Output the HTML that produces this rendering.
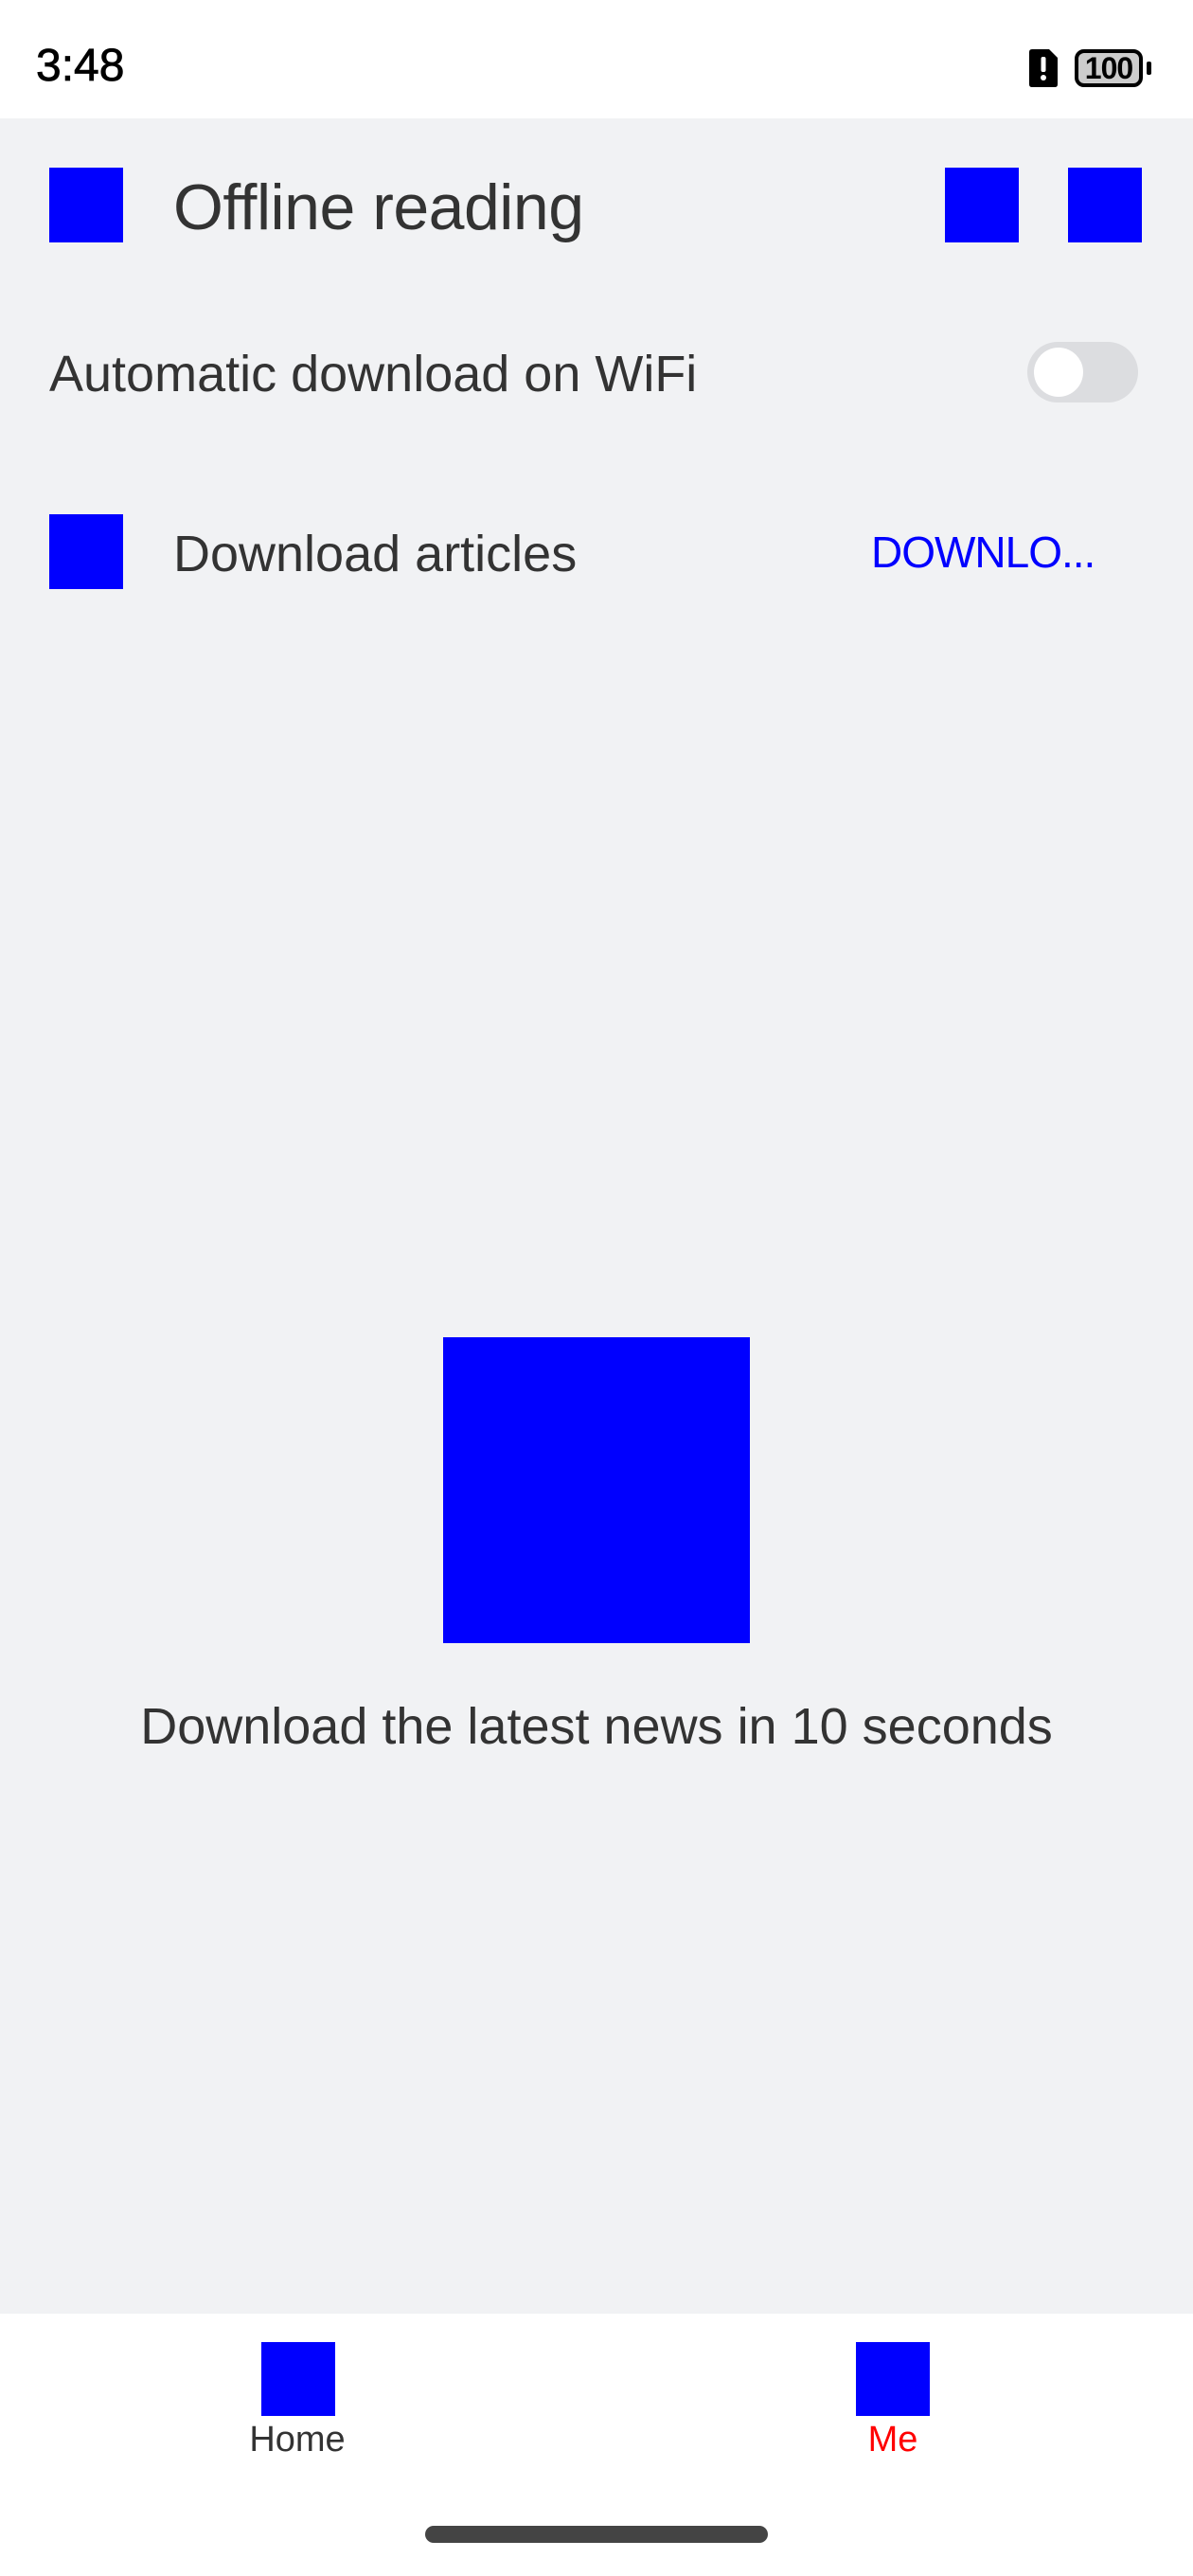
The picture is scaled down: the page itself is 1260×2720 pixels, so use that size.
<!DOCTYPE html>
<html><head><meta charset="utf-8"><style>
*{margin:0;padding:0;box-sizing:border-box}
body{width:1260px;height:2720px;background:#f1f2f4;font-family:"Liberation Sans",sans-serif;position:relative;overflow:hidden;color:#333}
.a{position:absolute}
.b{position:absolute;background:#0000ff}
</style></head><body>
<div class="a" style="left:0;top:0;width:1260px;height:125px;background:#fff"></div>
<div class="a" style="left:38px;top:45px;font-size:48px;color:#000;line-height:50px;font-weight:500;-webkit-text-stroke:0.8px #000">3:48</div>
<svg class="a" style="left:1087px;top:52px" width="32" height="40" viewBox="0 0 32 40"><path d="M3 0H21L30 9V37Q30 40 27 40H3Q0 40 0 37V3Q0 0 3 0Z" fill="#000"/><rect x="12.5" y="8" width="5" height="16" rx="2" fill="#fff"/><circle cx="15" cy="30" r="3" fill="#fff"/></svg>
<div class="a" style="left:1135px;top:52px;width:72px;height:40px;border:4px solid #000;border-radius:10px;background:#ccc;font-size:32px;font-weight:bold;color:#000;text-align:center;line-height:32px;letter-spacing:-1px">100</div>
<div class="a" style="left:1211px;top:65px;width:5px;height:14px;background:#000;border-radius:2px"></div>

<div class="b" style="left:52px;top:177px;width:78px;height:79px"></div>
<div class="a" style="left:183px;top:182px;font-size:68px;line-height:74px;letter-spacing:-0.5px">Offline reading</div>
<div class="b" style="left:998px;top:177px;width:78px;height:79px"></div>
<div class="b" style="left:1128px;top:177px;width:78px;height:79px"></div>

<div class="a" style="left:52px;top:367px;font-size:54px;line-height:56px">Automatic download on WiFi</div>
<div class="a" style="left:1085px;top:361px;width:117px;height:64px;border-radius:32px;background:#dcdde0"></div>
<div class="a" style="left:1092px;top:367px;width:52px;height:52px;border-radius:50%;background:#fff"></div>

<div class="b" style="left:52px;top:543px;width:78px;height:79px"></div>
<div class="a" style="left:183px;top:557px;font-size:54px;line-height:56px">Download articles</div>
<div class="a" style="left:920px;top:558px;font-size:46px;line-height:50px;color:#0000ff;letter-spacing:-1px">DOWNLO...</div>

<div class="b" style="left:468px;top:1412px;width:324px;height:323px"></div>
<div class="a" style="left:0;top:1793px;width:1260px;text-align:center;font-size:54px;line-height:60px">Download the latest news in 10 seconds</div>

<div class="a" style="left:0;top:2443px;width:1260px;height:277px;background:#fff"></div>
<div class="b" style="left:276px;top:2473px;width:78px;height:78px"></div>
<div class="a" style="left:214px;top:2555px;width:200px;text-align:center;font-size:38px;line-height:42px">Home</div>
<div class="b" style="left:904px;top:2473px;width:78px;height:78px"></div>
<div class="a" style="left:843px;top:2555px;width:200px;text-align:center;font-size:38px;line-height:42px;color:#f00">Me</div>
<div class="a" style="left:449px;top:2667px;width:362px;height:18px;border-radius:9px;background:#444"></div>
</body></html>
